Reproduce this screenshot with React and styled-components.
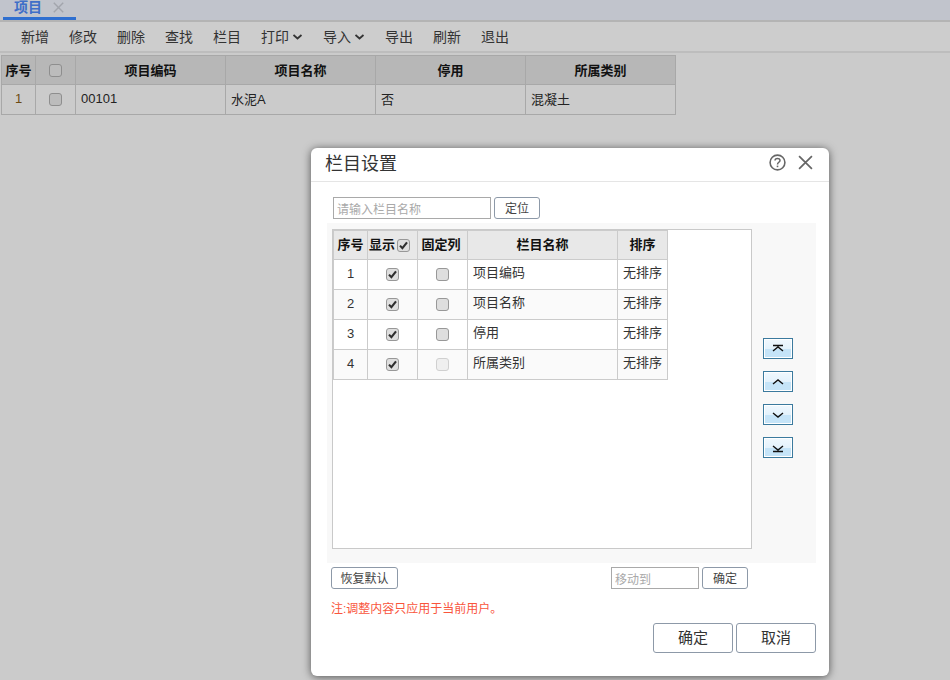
import styled, { createGlobalStyle } from "styled-components";

const GlobalStyle = createGlobalStyle`
  html, body {
    margin: 0;
    padding: 0;
    height: 100%;
    overflow: hidden;
  }
  body {
    background: #cbcbcb;
    font-family: "Liberation Sans", "Noto Sans CJK SC", sans-serif;
    font-size: 13px;
    color: #222;
  }
  * {
    box-sizing: border-box;
  }
`;

const Page = styled.div`
  width: 950px;
  height: 680px;
  position: relative;
  overflow: hidden;
  background: #cbcbcb;
`;

const TabBar = styled.div`
  height: 22px;
  background: #c1c4cc;
  border-bottom: 2px solid #b4b4b4;
  padding-left: 3px;
  overflow: hidden;
`;

const Tab = styled.div`
  width: 73px;
  height: 20px;
  border-bottom: 3px solid #2f6fd0;
  padding-left: 11px;
  display: flex;
  align-items: flex-end;
  gap: 11px;
  color: #3f6fc8;
  font-size: 14px;
  font-weight: 700;
  line-height: 19px;
`;

const TabClose = styled.span`
  color: #a2a5ac;
  display: flex;
  padding-bottom: 4px;
`;

const Toolbar = styled.div`
  height: 31px;
  background: #cdcdcd;
  border-bottom: 2px solid #bdbdbd;
  padding-left: 21px;
  display: flex;
  align-items: center;
  gap: 20px;
  color: #333;
  font-size: 14px;
`;

const ToolItem = styled.span`
  display: flex;
  align-items: center;
  gap: 4px;
  white-space: nowrap;
  line-height: 28px;
`;

const GridTable = styled.table`
  border-collapse: collapse;
  table-layout: fixed;
  width: 675px;
  margin: 2px 0 0 1px;
  td, th {
    border: 1px solid #a8a8a8;
    padding: 0 5px;
    font-size: 13px;
    overflow: hidden;
    white-space: nowrap;
  }
  th {
    height: 29px;
    background: #b7b7b7;
    color: #111;
    text-align: center;
    padding: 0 0 2px;
  }
  td {
    height: 30px;
    background: #cbcbcb;
    padding-bottom: 2px;
  }
`;

const CenterCell = styled.td`
  text-align: center;
  color: ${(p) => p.$color || "inherit"};
`;

const Box = styled.span`
  display: inline-flex;
  align-items: center;
  justify-content: center;
  vertical-align: middle;
  width: 13px;
  height: 13px;
  border-radius: 3px;
  border: 1px solid ${(p) => (p.$faint ? "#d0d0d0" : p.$dark ? "#8e8e8e" : "#989898")};
  background: ${(p) => (p.$faint ? "#efefef" : p.$dark ? "#bcbcbc" : "#dedede")};
`;

const Modal = styled.div`
  position: absolute;
  left: 311px;
  top: 148px;
  width: 518px;
  height: 528px;
  background: #fff;
  border-radius: 6px;
  box-shadow: 0 1px 8px rgba(0, 0, 0, 0.6);
  display: flex;
  flex-direction: column;
`;

const ModalHead = styled.div`
  height: 34px;
  border-bottom: 1px solid #e5e5e5;
  padding: 0 16px 4px 14px;
  display: flex;
  align-items: center;
  justify-content: space-between;
`;

const ModalTitle = styled.div`
  font-size: 18px;
  color: #333;
  line-height: 30px;
  padding-top: 2px;
`;

const HeadIcons = styled.div`
  display: flex;
  align-items: center;
  gap: 12px;
`;

const ModalBody = styled.div`
  flex: 1;
  display: flex;
  flex-direction: column;
  padding: 15px 13px 0 16px;
`;

const FindRow = styled.div`
  display: flex;
  gap: 3px;
  padding-left: 6px;
  height: 22px;
`;

const TextInput = styled.input`
  width: ${(p) => p.$w}px;
  height: 22px;
  border: 1px solid #a9a9a9;
  padding: 3px 3px 0;
  font: inherit;
  font-size: 12px;
  background: #fff;
  outline: none;
  &::placeholder {
    color: #a9a9a9;
    opacity: 1;
  }
`;

const SmallButton = styled.button`
  height: 22px;
  width: ${(p) => p.$w}px;
  border: 1px solid #8d99a8;
  border-radius: 3px;
  background: #fff;
  color: #444;
  font: inherit;
  font-size: 12px;
  padding: 0 0 2px;
`;

const Panel = styled.div`
  margin-top: 4px;
  height: 340px;
  background: #f8f8f8;
  padding: 6px 0 0 5px;
  display: flex;
`;

const ListBox = styled.div`
  width: 420px;
  height: 320px;
  background: #fff;
  border: 1px solid #c9c9c9;
`;

const ColTable = styled.table`
  border-collapse: collapse;
  table-layout: fixed;
  width: 334px;
  td, th {
    border: 1px solid #cbcbcb;
    font-size: 13px;
    padding: 0;
    overflow: hidden;
  }
  td {
    height: 30px;
    color: #333;
    padding: 0 5px 3px;
  }
  tbody tr:nth-child(even) td {
    background: #fafafa;
  }
`;

const HeadCell = styled.th`
  height: 29px;
  background: #e8e8e8;
  color: #111;
  text-align: ${(p) => (p.$left ? "left" : "center")};
  white-space: nowrap;
  && {
    padding: 0 ${(p) => p.$pr || 0}px 4px ${(p) => (p.$left ? 1 : 0)}px;
  }
`;

const HeadBox = styled.span`
  margin-left: 2px;
`;

const NameCell = styled.td`
  && {
    padding-bottom: 6px;
  }
`;

const ArrowColumn = styled.div`
  display: flex;
  flex-direction: column;
  gap: 12px;
  padding: 109px 0 0 11px;
`;

const ArrowButton = styled.button`
  width: 30px;
  height: 21px;
  padding: 0;
  border: 1px solid #3b7a9e;
  box-shadow: inset 0 0 0 1px #fff;
  background: linear-gradient(#f0f8fe 0, #e3f2fc 50%, #c5e4f8 50%, #c5e4f8 100%);
  display: flex;
`;

const BottomRow = styled.div`
  display: flex;
  justify-content: space-between;
  margin-top: 4px;
  padding: 0 68px 0 4px;
  height: 22px;
`;

const MoveGroup = styled.div`
  display: flex;
  gap: 3px;
`;

const Note = styled.div`
  margin-top: 12px;
  padding-left: 4px;
  color: #f9553c;
  font-size: 12px;
  line-height: 16px;
`;

const Footer = styled.div`
  margin-top: 6px;
  display: flex;
  justify-content: flex-end;
  gap: 3px;
`;

const BigButton = styled.button`
  width: 80px;
  height: 30px;
  border: 1px solid #8d99a8;
  border-radius: 3px;
  background: #fff;
  color: #333;
  font: inherit;
  font-size: 15px;
  padding: 0 0 4px;
`;

const Tick = () => (
  <svg width="9" height="9" viewBox="0 0 9 9">
    <path d="M1 4.6 L3.4 7.2 L8 1.4" fill="none" stroke="#2e2e2e" strokeWidth="2.1" />
  </svg>
);

const Check = ({ on, faint, dark }) => (
  <Box $faint={faint} $dark={dark}>
    {on && <Tick />}
  </Box>
);

const Caret = () => (
  <svg width="10" height="6" viewBox="0 0 10 6">
    <path d="M0.5 1 L4.5 4.5 L8.5 1" fill="none" stroke="#333" strokeWidth="1.8" />
  </svg>
);

const Close = ({ size, color, width }) => (
  <svg width={size} height={size} viewBox="0 0 14 14">
    <path d="M1 1 L13 13 M13 1 L1 13" fill="none" stroke={color} strokeWidth={width} />
  </svg>
);

const Help = () => (
  <svg width="17" height="17" viewBox="0 0 17 17">
    <circle cx="8.5" cy="8.5" r="7.4" fill="none" stroke="#666" strokeWidth="1.6" />
    <path d="M6 6.6 C6 3.7 11 3.7 11 6.5 C11 8.3 8.5 8.2 8.5 10.4" fill="none" stroke="#666" strokeWidth="1.5" />
    <rect x="7.7" y="11.6" width="1.6" height="1.6" fill="#666" />
  </svg>
);

const arrowPaths = {
  top: "M9 12 L14 8 L19 12 M9 6.5 H19",
  up: "M9 12 L14 8 L19 12",
  down: "M9 8 L14 12 L19 8",
  bottom: "M9 8 L14 12 L19 8 M9 13.5 H19",
};

const Arrow = ({ dir }) => (
  <ArrowButton>
    <svg width="28" height="19" viewBox="0 0 28 19">
      <path d={arrowPaths[dir]} fill="none" stroke="#111" strokeWidth="1.4" />
    </svg>
  </ArrowButton>
);

const tools = [
  ["新增"],
  ["修改"],
  ["删除"],
  ["查找"],
  ["栏目"],
  ["打印", true],
  ["导入", true],
  ["导出"],
  ["刷新"],
  ["退出"],
];

const columns = ["项目编码", "项目名称", "停用", "所属类别"];

export default function App() {
  return (
    <Page>
      <GlobalStyle />
      <TabBar>
        <Tab>
          项目
          <TabClose>
            <Close size={11} color="#a2a5ac" width={1.8} />
          </TabClose>
        </Tab>
      </TabBar>
      <Toolbar>
        {tools.map(([label, caret]) => (
          <ToolItem key={label}>
            {label}
            {caret && <Caret />}
          </ToolItem>
        ))}
      </Toolbar>
      <GridTable>
        <colgroup>
          <col width="34" />
          <col width="40" />
          <col width="150" />
          <col width="150" />
          <col width="150" />
          <col width="150" />
        </colgroup>
        <thead>
          <tr>
            <th>序号</th>
            <th>
              <Check dark />
            </th>
            {columns.map((c) => (
              <th key={c}>{c}</th>
            ))}
          </tr>
        </thead>
        <tbody>
          <tr>
            <CenterCell $color="#6b4a14">1</CenterCell>
            <CenterCell>
              <Check dark />
            </CenterCell>
            <td>00101</td>
            <td>水泥A</td>
            <td>否</td>
            <td>混凝土</td>
          </tr>
        </tbody>
      </GridTable>

      <Modal>
        <ModalHead>
          <ModalTitle>栏目设置</ModalTitle>
          <HeadIcons>
            <Help />
            <Close size={15} color="#666" width={1.6} />
          </HeadIcons>
        </ModalHead>
        <ModalBody>
          <FindRow>
            <TextInput $w={158} placeholder="请输入栏目名称" />
            <SmallButton $w={46}>定位</SmallButton>
          </FindRow>
          <Panel>
            <ListBox>
              <ColTable>
                <colgroup>
                  <col width="34" />
                  <col width="50" />
                  <col width="50" />
                  <col width="150" />
                  <col width="50" />
                </colgroup>
                <thead>
                  <tr>
                    <HeadCell>序号</HeadCell>
                    <HeadCell $left>
                      显示
                      <HeadBox>
                        <Check on />
                      </HeadBox>
                    </HeadCell>
                    <HeadCell $pr={3}>固定列</HeadCell>
                    <HeadCell>栏目名称</HeadCell>
                    <HeadCell>排序</HeadCell>
                  </tr>
                </thead>
                <tbody>
                  {columns.map((c, i) => (
                    <tr key={c}>
                      <CenterCell>{i + 1}</CenterCell>
                      <CenterCell>
                        <Check on />
                      </CenterCell>
                      <CenterCell>
                        <Check faint={i === 3} />
                      </CenterCell>
                      <NameCell>{c}</NameCell>
                      <NameCell>无排序</NameCell>
                    </tr>
                  ))}
                </tbody>
              </ColTable>
            </ListBox>
            <ArrowColumn>
              <Arrow dir="top" />
              <Arrow dir="up" />
              <Arrow dir="down" />
              <Arrow dir="bottom" />
            </ArrowColumn>
          </Panel>
          <BottomRow>
            <SmallButton $w={67}>恢复默认</SmallButton>
            <MoveGroup>
              <TextInput $w={88} placeholder="移动到" />
              <SmallButton $w={46}>确定</SmallButton>
            </MoveGroup>
          </BottomRow>
          <Note>注:调整内容只应用于当前用户。</Note>
          <Footer>
            <BigButton>确定</BigButton>
            <BigButton>取消</BigButton>
          </Footer>
        </ModalBody>
      </Modal>
    </Page>
  );
}
